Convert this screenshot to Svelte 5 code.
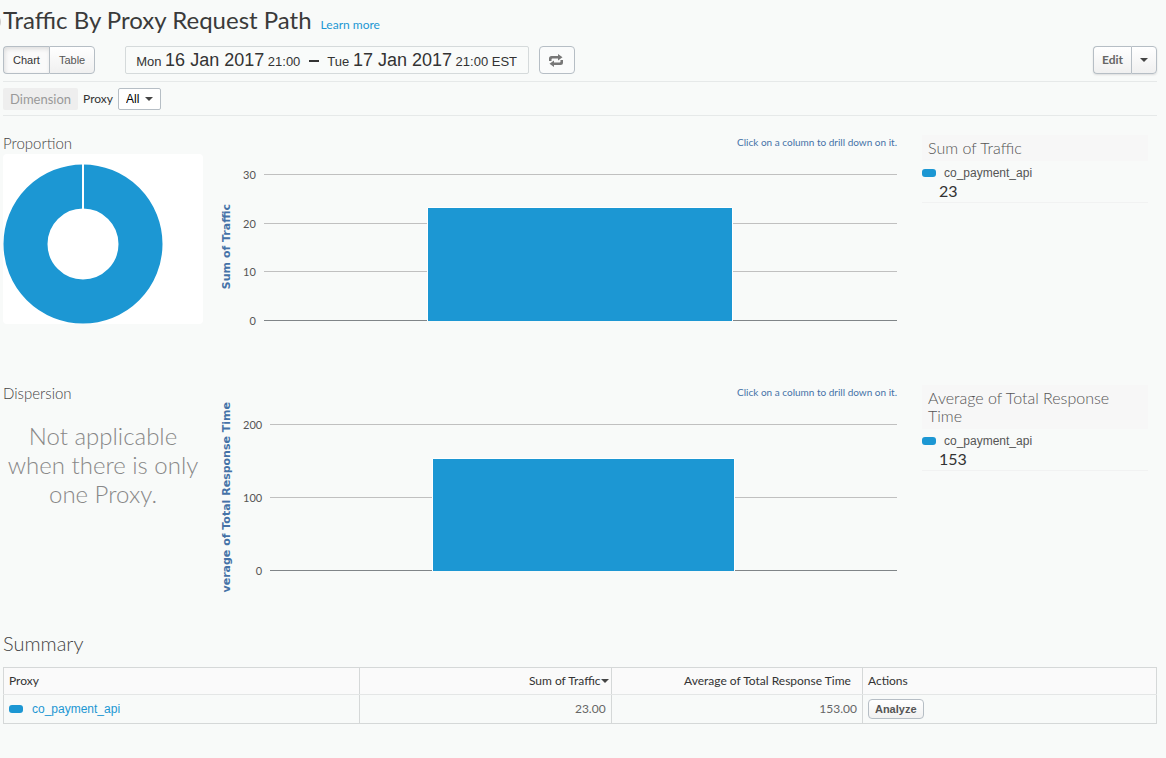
<script>
  const charts = [
    { id: 'traffic', heading: 'Proportion', metric: 'Sum of Traffic', axis: 'Sum of Traffic', value: 23, max: 30, ticks: [30, 20, 10, 0] },
    { id: 'response', heading: 'Dispersion', metric: 'Average of Total Response Time', axis: 'verage of Total Response Time', value: 153, max: 200, ticks: [200, 100, 0] }
  ];
  const series = 'co_payment_api';
  let view = $state('Chart');
</script>

<main>
  <header class="title">
    <h1>Traffic By Proxy Request Path</h1>
    <a href="#learn">Learn more</a>
  </header>

  <div class="toolbar">
    <div class="group">
      {#each ['Chart', 'Table'] as name}
        <button class:active={view === name} aria-pressed={view === name} onclick={() => (view = name)}>{name}</button>
      {/each}
    </div>
    <button class="range">Mon <b>16 Jan 2017</b> 21:00 <i></i> Tue <b>17 Jan 2017</b> 21:00 EST</button>
    <button class="refresh" aria-label="Refresh">
      <svg width="14" height="13" viewBox="0 0 14 13" fill="#777">
        <path d="M0 7V4.5Q0 2 2.500 2H9V0L13.500 3.200L9 6.500V4.500H3.500Q2.500 4.500 2.500 5.500V7Z" />
        <path d="M14 6V8.500Q14 11 11.500 11H5V13L.5 9.800L5 6.500V8.500H10.500Q11.500 8.500 11.500 7.500V6Z" />
      </svg>
    </button>
    <div class="group edit">
      <button>Edit</button>
      <button aria-label="More edit actions"><span class="caret"></span></button>
    </div>
  </div>

  <div class="filters">
    <span class="dimension">Dimension</span>
    <label for="proxy">Proxy</label>
    <div class="select">
      <select id="proxy"><option>All</option></select>
      <span class="caret"></span>
    </div>
  </div>

  {#each charts as c}
    <section class="row">
      <div class="side">
        <h2>{c.heading}</h2>
        {#if c.id === 'traffic'}
          <div class="donut">
            <svg width="160" height="170" viewBox="0 0 160 170">
              <circle cx="80" cy="90" r="57.5" fill="none" stroke="#1c97d3" stroke-width="44" />
              <path d="M80 10V55" stroke="#fff" stroke-width="2" />
            </svg>
          </div>
        {:else}
          <p class="empty">Not applicable when there is only one Proxy.</p>
        {/if}
      </div>
      <div class="chart">
        <p class="hint">Click on a column to drill down on it.</p>
        <div class="axis-title"><span>{c.axis}</span></div>
        <div class="ticks">
          {#each c.ticks as t}<span>{t}</span>{/each}
        </div>
        <div class="plot">
          <div class="lines">{#each c.ticks as t}<span></span>{/each}</div>
          <div class="bar" style:height="{(c.value / c.max) * 100}%"></div>
        </div>
      </div>
      <aside>
        <h3>{c.metric}</h3>
        <div class="legend">
          <span class="swatch"></span><span class="name">{series}</span>
          <strong>{c.value}</strong>
        </div>
      </aside>
    </section>
  {/each}

  <h2 class="summary">Summary</h2>
  <table>
    <thead>
      <tr>
        <th>Proxy</th>
        <th class="num sorted">Sum of Traffic<span class="caret"></span></th>
        <th class="num avg">Average of Total Response Time</th>
        <th>Actions</th>
      </tr>
    </thead>
    <tbody>
      <tr>
        <td><a class="series" href="#series"><span class="swatch"></span>{series}</a></td>
        <td class="num">23.00</td>
        <td class="num">153.00</td>
        <td class="action"><button class="analyze">Analyze</button></td>
      </tr>
    </tbody>
  </table>
</main>

<style>
  :global(body) { margin: 0; background: #f8faf9; }
  main { padding: 0 9px 0 3px; font: 12px/18px Lato, sans-serif; color: #333; }
  h1, h2, h3, p { margin: 0; font-weight: 400; }
  a { color: #1c97d3; text-decoration: none; }
  button, select { font: inherit; color: inherit; margin: 0; box-sizing: border-box; cursor: pointer; }
  .caret { display: inline-block; border: 4px solid transparent; border-top-color: #444; border-bottom: 0; }

  .title { position: relative; display: flex; align-items: baseline; gap: 9px; height: 46px; box-sizing: border-box; padding-top: 5px; }
  .title::before { content: ""; position: absolute; left: -18px; top: 14px; width: 16px; height: 16px; border-radius: 50%; background: #ccc; }
  h1 { font-size: 24px; line-height: 30px; color: #3a3a3a; }

  .toolbar { display: flex; height: 35px; border-bottom: 1px solid #e6e9e9; }
  .toolbar button { height: 28px; }
  .group { display: flex; border-radius: 4px; height: 28px; }
  .group button { padding: 0 9px; border: 1px solid #b6bec5; background: linear-gradient(#fff, #f0f0f0); font: 11px/26px "Liberation Sans", sans-serif; color: #555; }
  .group button:first-child { border-radius: 4px 0 0 4px; border-right: 0; }
  .group button:last-child { border-radius: 0 4px 4px 0; border-left: 1px solid #b6bec5; }
  .group .active { box-shadow: inset 1px 2px 4px #ddd; color: #333; background: #fafafa; }
  .range { margin-left: 30px; padding: 0 11px 0 10px; border: 1px solid #d5dadb; border-radius: 2px; background: #f9fbfa; font: 13px/26px "Liberation Sans", sans-serif; white-space: nowrap; }
  .range b { font-size: 18px; font-weight: 400; }
  .range i { display: inline-block; width: 10px; height: 2px; margin: 0 5px 4px; background: #333; }
  .refresh { display: flex; align-items: center; margin-left: 10px; padding: 0 11px 0 9px; border: 1px solid #b6bec5; border-radius: 4px; background: #fafbfb; }
  .edit { margin-left: auto; box-shadow: 0 1px 2px #ddd; }
  .edit button { padding: 0 8px; font: 700 12px/26px Lato, sans-serif; color: #666; }
  .edit button:last-child { display: flex; align-items: center; }

  .filters { display: flex; align-items: center; gap: 5px; height: 33px; border-bottom: 1px solid #e6e9e9; }
  .dimension { padding: 2px 7px; background: #eee; border-radius: 2px; color: #999; font-size: 13px; }
  .select { display: grid; align-items: center; }
  .select > * { grid-area: 1 / 1; }
  select { appearance: none; height: 22px; padding: 0 20px 0 7px; border: 1px solid #b6bec5; border-radius: 2px; background: #fff; font: 12px/20px "Liberation Sans", sans-serif; color: #000; }
  .select .caret { justify-self: end; margin-right: 8px; pointer-events: none; }

  .row { display: grid; grid-template-columns: 200px 1fr 226px; height: 250px; margin-right: 9px; }
  .row:first-of-type { margin-top: 17px; }
  h2 { font-size: 15px; line-height: 20px; font-weight: 300; color: #444; }
  .donut { height: 170px; margin-top: 1px; border-radius: 4px; background: #fff; }
  .donut svg { display: block; }
  .empty { padding: 18px 0; font-size: 24px; line-height: 29px; font-weight: 300; color: #888; text-align: center; }

  .chart { display: grid; grid-template-columns: 18px auto 1fr; grid-template-rows: 41px 147px; padding: 0 25px 0 15px; }
  .hint { grid-column: 1 / -1; font-size: 10px; color: #4572a7; text-align: right; }
  .axis-title { display: flex; align-items: center; justify-content: center; height: 186px; margin-top: -20px; }
  .axis-title span { flex: none; writing-mode: vertical-rl; transform: rotate(180deg); font: 700 11px/18px "DejaVu Sans", sans-serif; color: #4572a7; white-space: nowrap; }
  .ticks { display: flex; flex-direction: column; justify-content: space-between; padding: 0 8px 0 7px; text-align: right; color: #555; font-size: 11px; }
  .ticks span { height: 1px; line-height: 1px; }
  .plot { display: grid; }
  .plot > * { grid-area: 1 / 1; }
  .lines { display: flex; flex-direction: column; justify-content: space-between; }
  .lines span { height: 1px; background: #c0c0c0; }
  .lines span:last-child { background: #808588; }
  .bar { width: 48%; justify-self: center; align-self: end; background: #1c97d3; box-shadow: 0 -1px #fff, 1px 0 #fff, -1px 0 #fff; }

  aside { padding-top: 2px; }
  h3 { padding: 4px 6px; background: #f7f7f7; font-size: 16px; line-height: 18px; font-weight: 300; color: #555; }
  .legend { display: grid; grid-template-columns: 14px 1fr; column-gap: 8px; align-items: center; padding: 3px 0; border-bottom: 1px solid #f1f2f2; }
  .swatch { display: inline-block; width: 14px; height: 8px; border-radius: 3px; background: #1c97d3; }
  .name { font: 12px/18px "Liberation Sans", sans-serif; color: #555; }
  strong { grid-column: 1 / -1; padding-left: 17px; font-size: 16px; line-height: 17px; font-weight: 400; }

  .summary { font-size: 20px; line-height: 24px; padding: 0 0 12px; margin-top: -2px; }
  table { width: 100%; table-layout: fixed; border-collapse: collapse; border: 1px solid #d5d8d8; }
  th, td { box-sizing: border-box; padding: 0 5px; text-align: left; font-weight: 400; border-right: 1px solid #d5d8d8; }
  th { height: 27px; background: #fafafa; border-bottom: 1px solid #e4e6e6; }
  td { height: 29px; color: #666; font-size: 12px; }
  th:nth-child(1) { width: 30.9%; }
  th:nth-child(2), th:nth-child(3) { width: 21.8%; }
  .num { text-align: right; }
  .sorted { padding-right: 2px; }
  .sorted .caret { vertical-align: 2px; }
  .avg { padding-right: 11px; }
  .series { display: flex; align-items: center; gap: 9px; font: 12px/18px "Liberation Sans", sans-serif; }
  .analyze { display: block; height: 20px; padding: 0 6px; border: 1px solid #b6bec5; border-radius: 4px; background: linear-gradient(#fff, #f1f1f1); font: 700 11px/18px "Liberation Sans", sans-serif; color: #555; }
</style>
